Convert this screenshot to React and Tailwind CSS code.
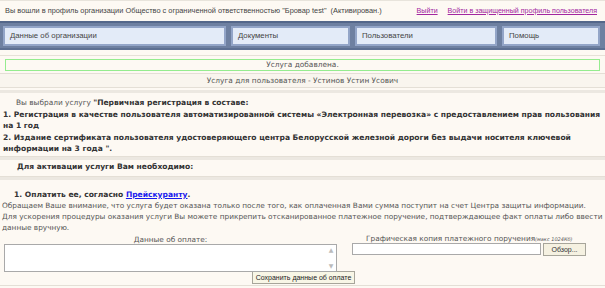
import React from "react";

export default function App() {
  return (
    <div className="w-[605px] h-[288px] overflow-hidden bg-[#fdf9f3] text-[#333] font-['DejaVu_Sans',sans-serif]">
      {/* top bar */}
      <div className="h-[21px] flex items-center pl-[5px] pr-[8px] border-t border-[#e8e4dc]">
        <div className="font-['Liberation_Sans',sans-serif] text-[7.4px] text-[#444] whitespace-nowrap">
          Вы вошли в профиль организации Общество с ограниченной ответственностью "Бровар test"&nbsp;&nbsp;(Активирован.)
        </div>
        <div className="ml-auto flex gap-[10px] font-['Liberation_Sans',sans-serif] text-[7.1px] text-[#a2269f] underline whitespace-nowrap">
          <span>Выйти</span>
          <span>Войти в защищенный профиль пользователя</span>
        </div>
      </div>
      {/* nav */}
      <div className="h-[29px] bg-[#6e80a1] border-t-2 border-b-2 border-t-[#54678a] border-b-[#5d7093] flex items-center gap-[5px] px-[3px]">
        {[
          ["Данные об организации", "w-[223px]"],
          ["Документы", "w-[119px]"],
          ["Пользователи", "w-[142px]"],
          ["Помощь", "w-[98px]"],
        ].map(([t, w]) => (
          <div
            key={t}
            className={`${w} h-[20px] bg-[#e3ebf8] border-2 border-[#93a5c8] flex items-center px-[5px] font-['Liberation_Sans',sans-serif] text-[7.8px] text-[#444]`}
          >
            {t}
          </div>
        ))}
      </div>
      {/* content */}
      <div className="mt-[5px] border-t border-[#e6e1d8]">
        <div className="pt-[3px] px-[5px]">
          <div className="h-[12px] border border-[#95ec8f] flex items-center justify-center text-[7.4px] text-[#555]">
            Услуга добавлена.
          </div>
        </div>
        <div className="mt-[2px] h-[15px] border-t border-b border-[#e4dfd6] bg-[#f9f5ee] flex items-center justify-center text-[7.4px] text-[#555]">
          Услуга для пользователя - Устинов Устин Усович
        </div>
        <div className="border-b-[3px] border-[#ece8e1] mt-[2px]" />
        <div className="pl-[3px] pr-[1px] pt-[4px] pb-[1px] text-[7.4px] leading-[11.5px]">
          <div className="pl-[13px]">
            <span className="text-[#555]">Вы выбрали услугу </span>
            <b className="text-[#333] text-[7.55px]">"Первичная регистрация в составе:</b>
          </div>
          <div className="font-bold text-[#333] text-[7.55px]">
            1. Регистрация в качестве пользователя автоматизированной системы «Электронная перевозка» с предоставлением прав пользования на 1 год
            <br />
            2. Издание сертификата пользователя удостоверяющего центра Белорусской железной дороги без выдачи носителя ключевой информации на 3 года ".
          </div>
        </div>
        <div className="border-t border-[#e4dfd6] border-b-[3px] border-b-[#ece8e1] h-[4px]" />
        <div className="px-[17px] pt-[1px] pb-[4px] text-[7.55px] leading-[11px] font-bold text-[#333]">
          Для активации услуги Вам необходимо:
        </div>
        <div className="border-t border-[#e4dfd6] border-b-[3px] border-b-[#ece8e1] h-[4px]" />
        <div className="pl-[2px] pr-0 pt-[9px] text-[7.35px] leading-[11px]">
          <div className="pl-[12px] font-bold text-[#333] text-[7.55px]">
            1. Оплатить ее, согласно <span className="text-[#1a1aee] underline">Прейскуранту</span>.
          </div>
          <div className="text-[#555]">
            Обращаем Ваше внимание, что услуга будет оказана только после того, как оплаченная Вами сумма поступит на счет Центра защиты информации.
            <br />
            Для ускорения процедуры оказания услуги Вы можете прикрепить отсканированное платежное поручение, подтверждающее факт оплаты либо ввести данные вручную.
          </div>
          <div className="flex mt-[2px]">
            <div className="w-[335px] pl-[2px] flex flex-col items-center">
              <div className="text-[#555] leading-[9px]">Данные об оплате:</div>
              <div className="w-[333px] h-[28px] bg-white border border-[#a9a9a9] relative">
                <div className="absolute right-0 top-0 bottom-0 w-[10px] flex flex-col justify-between items-center text-[#bbb] text-[6px] leading-[8px] py-[1px]">
                  <span>▲</span>
                  <span>▼</span>
                </div>
              </div>
            </div>
            <div className="w-[265px] flex flex-col">
              <div className="pl-[29px] text-[#555] leading-[8px] whitespace-nowrap">
                Графическая копия платежного поручения<span className="italic text-[5px]">(макс 1024Кб)</span>
              </div>
              <div className="flex items-center gap-[2px] pl-[15px]">
                <div className="w-[189px] h-[12px] bg-white border border-[#a9a9a9]" />
                <div className="w-[43px] h-[13px] bg-[#f5f1e1] border border-[#a7a59a] flex items-center justify-center font-['Liberation_Sans',sans-serif] text-[7px] text-[#333]">
                  Обзор...
                </div>
              </div>
            </div>
          </div>
          <div className="flex justify-center -mt-[1px]">
            <div className="h-[13px] px-[3px] bg-[#f8f6e6] border border-[#a7a59a] flex items-center font-['Liberation_Sans',sans-serif] text-[7px] text-[#222]">
              Сохранить данные об оплате
            </div>
          </div>
        </div>
        <div className="mt-[1px] border-t border-[#e4dfd6]" />
      </div>
    </div>
  );
}
